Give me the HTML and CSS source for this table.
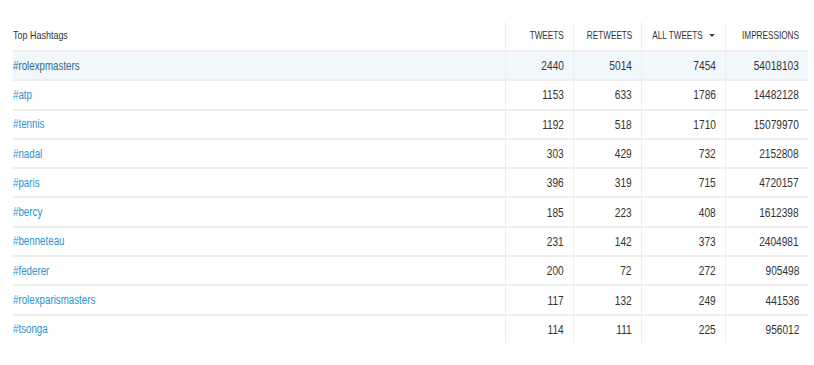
FILE: index.html
```html
<!DOCTYPE html>
<html>
<head>
<meta charset="utf-8">
<link rel="stylesheet" href="styles.css">
</head>
<body>
<div class="wrap">
<table class="ht">
  <colgroup>
    <col class="c-tag"><col class="c-n"><col class="c-n"><col class="c-all"><col class="c-imp">
  </colgroup>
  <thead>
    <tr>
      <th class="tag"><span class="t">Top Hashtags</span></th>
      <th><span class="t">TWEETS</span></th>
      <th><span class="t">RETWEETS</span></th>
      <th class="sorted"><span class="t">ALL TWEETS</span><span class="caret"></span></th>
      <th><span class="t">IMPRESSIONS</span></th>
    </tr>
  </thead>
  <tbody>
    <tr class="hl"><td class="tag"><a class="t">#rolexpmasters</a></td><td><span class="t">2440</span></td><td><span class="t">5014</span></td><td><span class="t">7454</span></td><td><span class="t">54018103</span></td></tr>
    <tr><td class="tag"><a class="t">#atp</a></td><td><span class="t">1153</span></td><td><span class="t">633</span></td><td><span class="t">1786</span></td><td><span class="t">14482128</span></td></tr>
    <tr><td class="tag"><a class="t">#tennis</a></td><td><span class="t">1192</span></td><td><span class="t">518</span></td><td><span class="t">1710</span></td><td><span class="t">15079970</span></td></tr>
    <tr><td class="tag"><a class="t">#nadal</a></td><td><span class="t">303</span></td><td><span class="t">429</span></td><td><span class="t">732</span></td><td><span class="t">2152808</span></td></tr>
    <tr><td class="tag"><a class="t">#paris</a></td><td><span class="t">396</span></td><td><span class="t">319</span></td><td><span class="t">715</span></td><td><span class="t">4720157</span></td></tr>
    <tr><td class="tag"><a class="t">#bercy</a></td><td><span class="t">185</span></td><td><span class="t">223</span></td><td><span class="t">408</span></td><td><span class="t">1612398</span></td></tr>
    <tr><td class="tag"><a class="t">#benneteau</a></td><td><span class="t">231</span></td><td><span class="t">142</span></td><td><span class="t">373</span></td><td><span class="t">2404981</span></td></tr>
    <tr><td class="tag"><a class="t">#federer</a></td><td><span class="t">200</span></td><td><span class="t">72</span></td><td><span class="t">272</span></td><td><span class="t">905498</span></td></tr>
    <tr><td class="tag"><a class="t">#rolexparismasters</a></td><td><span class="t">117</span></td><td><span class="t">132</span></td><td><span class="t">249</span></td><td><span class="t">441536</span></td></tr>
    <tr><td class="tag"><a class="t">#tsonga</a></td><td><span class="t">114</span></td><td><span class="t">111</span></td><td><span class="t">225</span></td><td><span class="t">956012</span></td></tr>
  </tbody>
</table>
</div>
</body>
</html>
```
FILE: styles.css
```css
html, body {
  margin: 0;
  padding: 0;
  background: #ffffff;
}
body {
  font-family: "Liberation Sans", Arial, Helvetica, sans-serif;
  color: #333333;
}
.wrap {
  padding: 22px 6px 0 13px;
}
.ht {
  width: 795px;
  border-collapse: collapse;
  table-layout: fixed;
}
.c-tag { width: 492px; }
.c-n { width: 68px; }
.c-all { width: 84px; }
.c-imp { width: 83px; }

/* condensed glyphs, as in the reference */
.t {
  display: inline-block;
  transform: scaleX(0.78);
  transform-origin: right center;
  white-space: nowrap;
}
.tag .t {
  transform-origin: left center;
}

.ht th {
  height: 29px;
  padding: 0 9px 3px 0;
  font-size: 10.5px;
  font-weight: normal;
  text-align: right;
  color: #333333;
  vertical-align: middle;
  white-space: nowrap;
  line-height: 12px;
  box-sizing: border-box;
}
.ht th.tag {
  font-size: 11.5px;
}
.ht th + th,
.ht td + td {
  border-left: 1px solid #eeeeee;
}
.ht td {
  height: 27.3px;
  padding: 0 9px 0 0;
  font-size: 13px;
  line-height: 15px;
  text-align: right;
  vertical-align: middle;
  border-top: 2px solid #eeeeee;
  color: #333333;
  white-space: nowrap;
}
.ht .tag {
  text-align: left;
  padding-right: 0;
}
.ht td.tag a {
  color: #2b93d1;
  font-size: 12.5px;
  text-decoration: none;
}
.ht tr.hl td {
  background: #f1f8fb;
}
.ht tr.hl td.tag a {
  color: #2a6b8c;
}
.ht th.sorted {
  padding-right: 10px;
}
.sorted .t {
  margin-left: -16px;
}
.caret {
  display: inline-block;
  width: 0;
  height: 0;
  margin-left: 6px;
  border-left: 3px solid transparent;
  border-right: 3px solid transparent;
  border-top: 3px solid #444444;
  vertical-align: 2px;
}
```
